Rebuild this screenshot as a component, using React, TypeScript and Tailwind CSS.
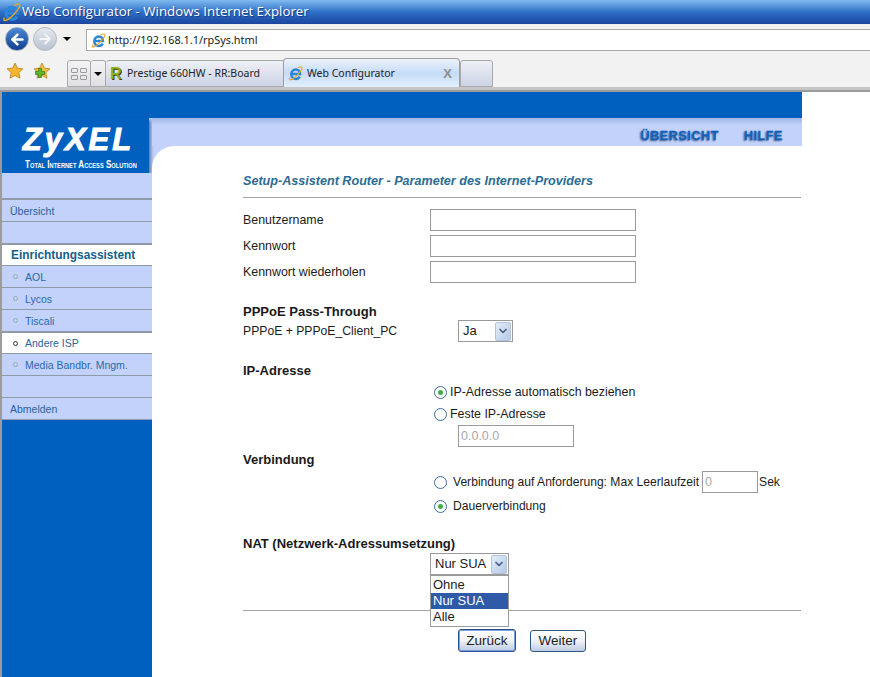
import { ArrowLeft, ArrowRight, ChevronDown } from "lucide-react";
import type { ReactNode } from "react";

const ui = "font-['Noto_Sans',sans-serif]";

function IeIcon({ size = 16 }: { size?: number }) {
  return (
    <svg width={size} height={size} viewBox="0 0 20 20" fill="none" aria-hidden="true">
      <path d="M5 10.800H16C16 6.900 13.500 4.600 10.400 4.600 7 4.600 4.400 7.300 4.400 11S7 17.300 10.400 17.300C12.800 17.300 14.600 16.200 15.700 14.200" stroke="#2a86d8" strokeWidth="3.300" />
      <path d="M2.500 15.500C.5 19 3.500 19.500 7.500 16.500 12 13 16.500 8 18.500 4 19.800 1 16.500.3 12.500 2.800" stroke="#e5a71e" strokeWidth="1.500" />
    </svg>
  );
}

function Star({ plus = false }: { plus?: boolean }) {
  return (
    <svg width="18" height="18" viewBox="0 0 18 18" aria-hidden="true">
      <path d="M9 1l2.400 5.200 5.600.6-4.200 3.800 1.200 5.600L9 13.400l-5 2.800 1.200-5.600L1 6.800l5.600-.6Z" fill={plus ? "#f2c23c" : "#f5b52e"} stroke="#b9801a" strokeWidth="0.800" />
      {plus && <path d="M7 5.500h3v3h3v3h-3v3H7v-3H4v-3h3Z" fill="#63b52c" stroke="#2f7a14" strokeWidth="0.700" transform="translate(-1.500 1)" />}
    </svg>
  );
}

function Caret() {
  return <span className="border-x-[4px] border-t-[4px] border-x-transparent border-t-black" />;
}

function BrowserChrome() {
  return (
    <div className={`${ui} shrink-0`}>
      <div className="flex h-[24px] items-center gap-[1px] bg-gradient-to-b from-[#80baf0] via-[#2f70c8] to-[#1b459e] pl-[2px]">
        <IeIcon size={19} />
        <span className="font-['Open_Sans',sans-serif] text-[13.300px] leading-none text-white [text-shadow:1px_1px_1px_#1b3a80]">Web Configurator - Windows Internet Explorer</span>
      </div>
      <div className="flex h-[27px] items-center bg-[#f1f1ef] pl-[5px]">
        <div className="mt-[3px] flex h-[24px] w-[24px] items-center justify-center rounded-full border border-[#9aa9bd] bg-gradient-to-b from-[#4a88d6] to-[#123f8f]">
          <ArrowLeft size={17} strokeWidth={3.500} className="text-white" />
        </div>
        <div className="mt-[3px] ml-[4px] flex h-[24px] w-[24px] items-center justify-center rounded-full border border-[#b5b9bf] bg-gradient-to-b from-[#e4e8ee] to-[#b9c3d0]">
          <ArrowRight size={16} strokeWidth={3} className="text-[#f3f5f8]" />
        </div>
        <span className="ml-[6px] mt-[3px] flex"><Caret /></span>
        <div className="mt-[5px] ml-[15px] flex h-[22px] flex-1 items-center gap-[2px] border-y border-l border-[#a8a8a8] bg-white pl-[4px]">
          <IeIcon size={15} />
          <span className="text-[10.900px] leading-none text-[#222]">http://192.168.1.1/rpSys.html</span>
        </div>
      </div>
      <div className="flex h-[39px] items-end border-b-[3px] border-[#c6c6c6] bg-[#f2f2f2] pb-0">
        <div className="mb-[7px] ml-[6px] flex gap-[9px] self-end">
          <Star />
          <Star plus />
        </div>
        <div className="ml-[16px] flex h-[27px] w-[24px] items-center justify-center rounded-t-[3px] border border-[#a9a9a9] bg-gradient-to-b from-[#f4f4f6] to-[#e0e0e4]">
          <div className="grid grid-cols-2 gap-[2px]">
            <span className="h-[5px] w-[7px] rounded-[1px] border border-[#9a9a9a]" />
            <span className="h-[5px] w-[7px] rounded-[1px] border border-[#9a9a9a]" />
            <span className="h-[5px] w-[7px] rounded-[1px] border border-[#9a9a9a]" />
            <span className="h-[5px] w-[7px] rounded-[1px] border border-[#9a9a9a]" />
          </div>
        </div>
        <div className="flex h-[27px] w-[15px] items-center justify-center rounded-t-[3px] border border-l-0 border-[#a9a9a9] bg-gradient-to-b from-[#f4f4f6] to-[#e0e0e4]">
          <Caret />
        </div>
        <div className="flex h-[27px] w-[179px] items-center gap-[3px] rounded-t-[3px] border border-l-0 border-[#a9a9a9] bg-gradient-to-b from-[#eef0f6] to-[#cdd4e6] pl-[4px]">
          <span className="w-[14px] font-['Liberation_Sans',sans-serif] text-[16px] font-bold leading-none text-[#8fae1e] [text-shadow:1px_1px_0_#3a3a10]">R</span>
          <span className="text-[10.500px] leading-none text-[#222]">Prestige 660HW - RR:Board</span>
        </div>
        <div className="relative -ml-[2px] flex h-[29px] w-[177px] items-center gap-[4px] rounded-t-[4px] border border-b-0 border-[#a0a0a0] bg-gradient-to-b from-[#edf2fa] via-[#c5dcf8] to-[#e2effd] pl-[4px]">
          <IeIcon size={15} />
          <span className="flex-1 text-[10.500px] leading-none text-[#222]">Web Configurator</span>
          <span className="mr-[7px] font-['Liberation_Sans',sans-serif] text-[13px] font-bold leading-none text-[#8d8d8d]">X</span>
        </div>
        <div className="h-[27px] w-[33px] rounded-t-[3px] border border-[#a9a9a9] bg-gradient-to-b from-[#eef0f6] to-[#cdd4e6]" />
      </div>
    </div>
  );
}

type NavRow = { label?: string; kind?: "top" | "sub" | "head"; active?: boolean; h: number; thick?: boolean };

const navRows: NavRow[] = [
  { h: 23, thick: true },
  { label: "Übersicht", kind: "top", h: 21 },
  { h: 21, thick: true },
  { label: "Einrichtungsassistent", kind: "head", active: true, h: 20 },
  { label: "AOL", kind: "sub", h: 21 },
  { label: "Lycos", kind: "sub", h: 21 },
  { label: "Tiscali", kind: "sub", h: 21, thick: true },
  { label: "Andere ISP", kind: "sub", active: true, h: 20 },
  { label: "Media Bandbr. Mngm.", kind: "sub", h: 21 },
  { h: 21 },
  { label: "Abmelden", kind: "top", h: 21 },
];

function Sidebar() {
  return (
    <aside className="flex w-[150px] shrink-0 flex-col">
      <div className="flex h-[55px] w-[147px] flex-col items-center overflow-hidden bg-[#0060bf] shadow-[2px_2px_3px_rgba(0,0,40,0.45)]">
        <div className="mt-[8px] h-[28px] pl-[6px] font-['Liberation_Sans',sans-serif] text-[31px] font-bold italic leading-[28px] tracking-[3px] text-white [-webkit-text-stroke:1px_white]">ZyXEL</div>
        <div className="mt-[5px] ml-[10px] h-[11px] origin-top scale-x-[0.81] whitespace-nowrap font-['Liberation_Sans',sans-serif] text-[10px] font-bold leading-[11px] text-white [font-variant:small-caps]">Total Internet Access Solution</div>
      </div>
      <div className="h-[2px] bg-[#c2d2fb]" />
      {navRows.map((r, i) => (
        <div
          key={i}
          style={{ height: r.h + (r.thick ? 2 : 1) }}
          className={`flex items-center font-['Liberation_Sans',sans-serif] ${r.thick ? "border-b-2" : "border-b"} border-[#8f9aa8] ${r.active ? "bg-white" : "bg-[#c2d2fb]"}`}
        >
          {r.kind === "top" && <span className="pl-[8px] pt-[3px] text-[10.500px] text-[#2a5f9e]">{r.label}</span>}
          {r.kind === "head" && <span className="pl-[9px] pt-[2px] text-[11.900px] font-bold text-[#13608c]">{r.label}</span>}
          {r.kind === "sub" && (
            <>
              <span className={`ml-[12px] mr-[8px] h-[5px] w-[5px] rounded-full border ${r.active ? "border-[#333]" : "border-[#9aa]"} -translate-x-[1px]`} />
              <span className={`-ml-[2px] text-[10.500px] ${r.active ? "pt-[1px] text-[#2a5f9e]" : "pt-[3px] text-[#2a6aa8]"}`}>{r.label}</span>
            </>
          )}
        </div>
      ))}
      <div className="flex-1 bg-[#0060bf]" />
    </aside>
  );
}

function Radio({ checked = false }: { checked?: boolean }) {
  return (
    <span className="flex h-[13px] w-[13px] shrink-0 items-center justify-center rounded-full border border-[#3a6ea5] bg-white">
      {checked && <span className="h-[5px] w-[5px] rounded-full bg-[#3fae49]" />}
    </span>
  );
}

function SelectArrow() {
  return (
    <span className="flex h-[19px] w-[16px] items-center justify-center rounded-[2px] border border-[#b4c4dc] bg-gradient-to-br from-[#e4edf9] to-[#b4c9e6]">
      <ChevronDown size={12} strokeWidth={3.500} className="text-[#4d6185]" />
    </span>
  );
}

function TextBox({ w, value = "" }: { w: string; value?: string }) {
  return (
    <input
      readOnly
      value={value}
      className={`${w} h-[22px] border border-[#9a9a9a] bg-white px-[2px] text-[12.500px] text-[#a8a8a8] outline-none`}
    />
  );
}

function Heading({ children, className = "" }: { children: ReactNode; className?: string }) {
  return <div className={`text-[13px] font-bold leading-[16px] text-[#1a1a1a] ${className}`}>{children}</div>;
}

function CredentialRow({ label }: { label: string }) {
  return (
    <div className="mb-[4px] flex h-[22px] items-center">
      <span className="w-[187px]">{label}</span>
      <TextBox w="w-[206px]" />
    </div>
  );
}

function Content() {
  return (
    <main className="flex-1 rounded-tl-[22px] bg-white pl-[91px] font-['Liberation_Sans',sans-serif] text-[12.400px] leading-[16px] text-[#1c1c1c]">
      <div className="mt-[27px] text-[12.600px] font-bold italic text-[#2a6c94]">Setup-Assistent Router - Parameter des Internet-Providers</div>
      <div className="mt-[8px] h-px w-[558px] bg-[#a6a6a6]" />
      <div className="mt-[11px]">
        <CredentialRow label="Benutzername" />
        <CredentialRow label="Kennwort" />
        <CredentialRow label="Kennwort wiederholen" />
      </div>
      <Heading className="mt-[21px]">PPPoE Pass-Through</Heading>
      <div className="flex h-[22px] items-center">
        <span className="w-[215px] text-[12.200px]">PPPoE + PPPoE_Client_PC</span>
        <div className="flex h-[22px] w-[55px] items-center justify-between border border-[#9a9a9a] pl-[4px] pr-[1px]">
          <span className="text-[13px]">Ja</span>
          <SelectArrow />
        </div>
      </div>
      <Heading className="mt-[21px]">IP-Adresse</Heading>
      <div className="ml-[191px] mt-[2px] flex h-[22px] items-center gap-[3px]">
        <Radio checked />
        <span>IP-Adresse automatisch beziehen</span>
      </div>
      <div className="ml-[191px] flex h-[22px] items-center gap-[3px]">
        <Radio />
        <span>Feste IP-Adresse</span>
      </div>
      <div className="ml-[215px]">
        <TextBox w="w-[116px]" value="0.0.0.0" />
      </div>
      <Heading className="mt-[5px]">Verbindung</Heading>
      <div className="ml-[191px] mt-[3px] flex h-[22px] items-center text-[12.100px]">
        <Radio />
        <span className="ml-[6px]">Verbindung auf Anforderung: Max Leerlaufzeit</span>
        <span className="ml-[3px]"><TextBox w="w-[56px]" value="0" /></span>
        <span className="ml-[1px]">Sek</span>
      </div>
      <div className="ml-[191px] mt-[2px] flex h-[22px] items-center text-[12.100px]">
        <Radio checked />
        <span className="ml-[6px]">Dauerverbindung</span>
      </div>
      <Heading className="mt-[19px]">NAT (Netzwerk-Adressumsetzung)</Heading>
      <div className="relative ml-[187px] mt-[1px] flex h-[22px] w-[79px] items-center justify-between border border-[#9a9a9a] pl-[4px] pr-[1px]">
        <span className="text-[13px]">Nur SUA</span>
        <SelectArrow />
        <div className="absolute left-[-1px] top-[21px] z-10 w-[79px] border border-[#9a9a9a] bg-white py-[1px] text-[13px] leading-[16px]">
          <div className="pl-[2px]">Ohne</div>
          <div className="bg-[#2f5aa8] pl-[2px] text-white">Nur SUA</div>
          <div className="pl-[2px]">Alle</div>
        </div>
      </div>
      <div className="mt-[35px] h-px w-[558px] bg-[#a6a6a6]" />
      <div className="ml-[215px] mt-[18px] flex items-center gap-[14px] pb-[24px] font-['Liberation_Sans',sans-serif]">
        <button className="h-[23px] w-[58px] rounded-[3px] border border-[#27508f] bg-gradient-to-b from-white via-[#f0f3f8] to-[#b9c9e4] text-[13.500px] shadow-[inset_0_0_0_1px_#7fa0d8]">Zurück</button>
        <button className="h-[22px] w-[56px] rounded-[3px] border border-[#33567f] bg-gradient-to-b from-white via-[#f0f3f8] to-[#bdcbe2] text-[13.500px]">Weiter</button>
      </div>
    </main>
  );
}

export default function App() {
  return (
    <div className="flex h-[677px] w-[870px] flex-col overflow-hidden bg-white">
      <BrowserChrome />
      <div className="flex flex-1 border-l-2 border-t-2 border-[#9c9c9c]">
        <div className="flex w-[800px] flex-col">
          <div className="h-[26px] shrink-0 bg-[#0060bf]" />
          <div className="flex flex-1 bg-[#c2d2fb]">
            <Sidebar />
            <div className="flex flex-1 flex-col">
              <div className="flex h-[28px] items-start justify-end gap-[25px] bg-gradient-to-b from-[#9fb6e6] from-0% to-[#c2d2fb] to-25% pr-[19px] pt-[10px] font-['Liberation_Sans',sans-serif] text-[12.500px] font-bold leading-[16px] tracking-[0.6px] text-[#0f62b8] [-webkit-text-stroke:0.3px_#0f62b8] [text-shadow:-1px_1px_2px_#3a4d78]">
                <span>ÜBERSICHT</span>
                <span>HILFE</span>
              </div>
              <Content />
            </div>
          </div>
        </div>
      </div>
    </div>
  );
}
